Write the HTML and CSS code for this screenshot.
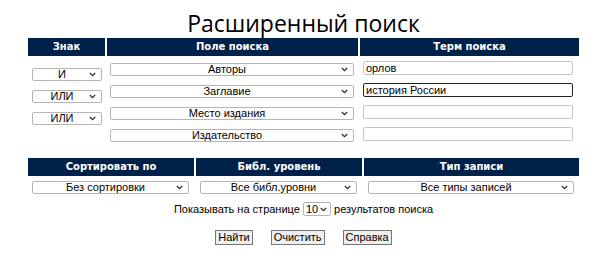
FILE: index.html
```html
<!DOCTYPE html>
<html lang="ru">
<head>
    <meta charset="UTF-8" />
    <title>Расширенный поиск</title>
    <link rel="stylesheet" href="styles.css">
</head>
<body>
<div class="container">
    <h1>Расширенный поиск</h1>
    <form id="search-form">
        <div class="terms">
            <div class="head">Знак</div>
            <div class="head">Поле поиска</div>
            <div class="head">Терм поиска</div>

            <div class="col signs">
                <select><option>И</option><option>ИЛИ</option><option>НЕ</option></select>
                <select><option>ИЛИ</option><option>И</option><option>НЕ</option></select>
                <select><option>ИЛИ</option><option>И</option><option>НЕ</option></select>
            </div>
            <div class="col fields">
                <select><option>Авторы</option></select>
                <select><option>Заглавие</option></select>
                <select><option>Место издания</option></select>
                <select><option>Издательство</option></select>
            </div>
            <div class="col values">
                <input type="text" value="орлов" />
                <input type="text" value="история России" class="active" />
                <input type="text" />
                <input type="text" />
            </div>
        </div>

        <div class="filters">
            <div class="head">Сортировать по</div>
            <div class="head">Библ. уровень</div>
            <div class="head">Тип записи</div>
            <select><option>Без сортировки</option></select>
            <select><option>Все библ.уровни</option></select>
            <select><option>Все типы записей</option></select>
        </div>

        <div class="per-page">
            Показывать на странице
            <select class="small"><option>10</option><option>20</option><option>50</option></select>
            результатов поиска
        </div>

        <div class="buttons">
            <button type="submit">Найти</button>
            <button type="reset">Очистить</button>
            <button type="button">Справка</button>
        </div>
    </form>
</div>
</body>
</html>
```

FILE: styles.css
```css
body {
    margin: 0;
    font-family: "Liberation Sans", Arial, sans-serif;
    font-size: 11px;
    color: #000;
    background: #fff;
}
.container {
    width: 551px;
    margin: 0 auto;
}
h1 {
    font-family: "Open Sans", sans-serif;
    font-weight: normal;
    font-size: 23px;
    line-height: 30px;
    margin: 8px 0 0;
    text-align: center;
}
.head {
    background: #00214a;
    color: #fff;
    font-family: "DejaVu Sans", Verdana, sans-serif;
    font-weight: bold;
    font-size: 10px;
    height: 18px;
    line-height: 18px;
    text-align: center;
}
select, input {
    font-family: "Liberation Sans", Arial, sans-serif;
    font-size: 11px;
    height: 13px;
    line-height: 11px;
    box-sizing: border-box;
    margin: 0;
}
select {
    appearance: none;
    -webkit-appearance: none;
    padding: 0 14px 0 4px;
    border: 1px solid #b5b5b5;
    border-radius: 2px;
    background: #fff url("data:image/svg+xml,%3Csvg xmlns='http://www.w3.org/2000/svg' width='7' height='5' viewBox='0 0 7 5'%3E%3Cpath d='M0.8 1 L3.5 3.7 L6.2 1' fill='none' stroke='%23333' stroke-width='1.3'/%3E%3C/svg%3E") no-repeat right 5px center;
    text-align-last: center;
}
input {
    height: 14px;
    padding: 0 2px;
    border: 1px solid #c4c4c4;
    border-radius: 2px;
}
input.active {
    border-color: #222;
}
.terms {
    display: grid;
    grid-template-columns: 77px 251px 1fr;
    column-gap: 2px;
}
.col {
    display: flex;
    flex-direction: column;
    gap: 9px;
}
.signs {
    padding: 12px 3px 0 4px;
}
.signs select {
    width: 70px;
}
.fields {
    padding: 7px 4px 0 3px;
}
.values {
    padding: 5px 6px 0 3px;
    gap: 8px;
}
.filters {
    display: grid;
    grid-template-columns: 166px 166px 1fr;
    column-gap: 2px;
    row-gap: 5px;
    margin-top: 16px;
}
.filters select {
    margin: 0 5px 0 4px;
}
.per-page {
    text-align: center;
    margin-top: 8px;
    height: 14px;
    line-height: 14px;
}
.per-page select.small {
    width: 28px;
    height: 14px;
    padding: 0 11px 0 2px;
    background-position: right 3px center;
    text-align-last: left;
    vertical-align: top;
}
.buttons {
    display: flex;
    justify-content: center;
    gap: 18px;
    margin-top: 14px;
}
button {
    font-family: "Liberation Sans", Arial, sans-serif;
    font-size: 11px;
    line-height: 13px;
    padding: 0 2px;
    background: #efefef;
    border: 1px solid #767676;
    border-radius: 0;
    color: #000;
}
```
